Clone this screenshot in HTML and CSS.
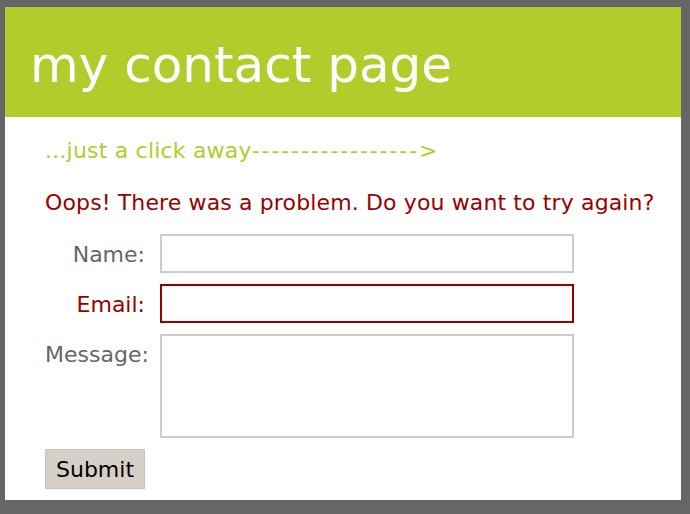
FILE: index.html
```html
<!DOCTYPE html>
<html lang="en">
<head>
  <meta charset="UTF-8">
  <meta name="viewport" content="width=device-width, initial-scale=1.0">
  <title>my contact page</title>
  <link rel="stylesheet" href="styles.css">
</head>
<body>

  <div class="page">
    <header>
      <h1>my contact page</h1>
    </header>

    <main>
      <p class="tagline">...just a click away<span class="dashes">-----------------</span>&gt;</p>
      <p class="error-msg">Oops! There was a problem. Do you want to try again?</p>

      <form class="contact-form">
        <div class="form-row">
          <label for="name">Name:</label>
          <input type="text" id="name">
        </div>
        <div class="form-row has-error">
          <label for="email">Email:</label>
          <input type="email" id="email">
        </div>
        <div class="form-row">
          <label for="message">Message:</label>
          <textarea id="message"></textarea>
        </div>
        <button type="submit">Submit</button>
      </form>
    </main>
  </div>

</body>
</html>
```

FILE: styles.css
```css
html, body {
  margin: 0;
  height: 100%;
}

body {
  background-color: #666;
  font-family: "DejaVu Sans", Verdana, sans-serif;
  font-size: 22px;
  color: #666;
}

.page {
  margin: 7px 9px 0 5px;
  background-color: #fff;
}

header {
  background-color: #b0cd2c;
  height: 110px;
  box-sizing: border-box;
  padding: 29px 22px 0 25px;
}

header h1 {
  margin: 0;
  font-size: 50px;
  font-weight: normal;
  line-height: normal;
  color: #fff;
}

main {
  padding: 21px 10px 11px 40px;
}

.tagline {
  margin: 0;
  line-height: 26px;
  color: #b0cd2c;
  letter-spacing: 0.2px;
}

.tagline .dashes {
  letter-spacing: 1.9px;
}

.error-msg {
  margin: 26px 0 0;
  line-height: 26px;
  white-space: nowrap;
  letter-spacing: 0.13px;
  color: #990000;
}

.contact-form {
  margin-top: 18px;
}

.form-row {
  display: flex;
  align-items: flex-start;
  margin-bottom: 11px;
}

.form-row label {
  width: 100px;
  flex-shrink: 0;
  margin-right: 15px;
  padding-top: 8px;
  text-align: right;
  white-space: nowrap;
  line-height: normal;
}

.form-row input,
.form-row textarea {
  width: 414px;
  height: 39px;
  box-sizing: border-box;
  margin: 0;
  padding: 4px;
  border: 2px solid #ccc;
  font-family: inherit;
  font-size: 18px;
  background-color: #fff;
}

.form-row textarea {
  height: 104px;
  resize: none;
}

.form-row.has-error label {
  color: #990000;
}

.form-row.has-error input {
  border-color: #990000;
}

.contact-form button {
  width: 100px;
  height: 40px;
  margin: 0;
  padding: 0;
  background-color: #d4d0c8;
  border: 1px solid #c8c4bc;
  color: #000;
  font-family: inherit;
  font-size: 22px;
}
```
